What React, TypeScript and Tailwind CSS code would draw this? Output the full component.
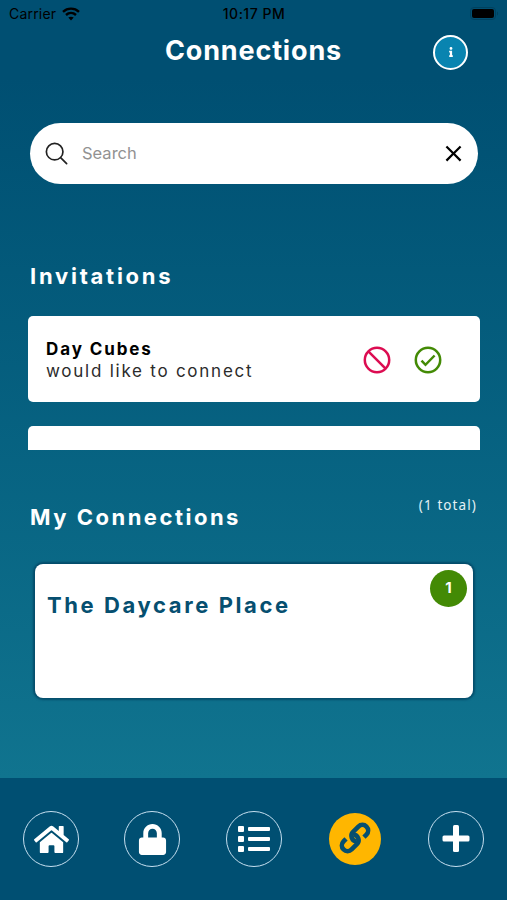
import { useState } from 'react';
import type { ComponentType } from 'react';
import { FaHome, FaInfo, FaList, FaLock } from 'react-icons/fa';
import { IoSearchOutline } from 'react-icons/io5';
import { MdClose } from 'react-icons/md';

interface Tab {
  id: string;
  icon: ComponentType<{ size?: number }>;
  size: number;
}

const TABS: Tab[] = [
  { id: 'home', icon: FaHome, size: 35 },
  { id: 'lock', icon: FaLock, size: 31 },
  { id: 'list', icon: FaList, size: 32 },
  { id: 'connections', icon: ChainIcon, size: 34 },
  { id: 'add', icon: PlusIcon, size: 28 },
];

export default function App() {
  const [search, setSearch] = useState('');
  const [activeTab, setActiveTab] = useState('connections');

  return (
    <div className="flex flex-col h-[900px] w-[507px] overflow-hidden bg-[#004f72] font-['Inter',sans-serif]">
      <div className="flex flex-col h-[778px] bg-linear-to-b from-[#004f72] from-10% to-[#10748f]">
        <StatusBar />

        <header className="grid grid-cols-[1fr_auto_1fr] items-center h-[50px] px-[39px]">
          <h1 className="col-start-2 text-[27px] leading-none font-bold tracking-[0.85px] text-white pb-1">Connections</h1>
          <button className="justify-self-end flex items-center justify-center size-[35px] rounded-full border-[2.5px] border-white bg-[#0984b0] text-white">
            <FaInfo size={10} />
          </button>
        </header>

        <div className="flex items-center h-[61px] mt-[46px] ml-[30px] mr-[29px] pl-[13px] pr-3 rounded-full bg-white">
          <IoSearchOutline size={27} className="text-[#222]" />
          <input
            type="text"
            placeholder="Search"
            value={search}
            onChange={(e) => setSearch(e.target.value)}
            className="flex-1 min-w-0 pl-3 text-[16.5px] text-black placeholder:text-[#929292] focus:outline-none"
          />
          <button onClick={() => setSearch('')}>
            <MdClose size={27} className="-mr-px text-black" />
          </button>
        </div>

        <section className="flex flex-col pt-[78px] px-7">
          <h2 className="pl-0.5 text-[22px] leading-7 font-bold tracking-[2.75px] text-white">Invitations</h2>
          <div className="h-[134px] mt-[26px] -mr-px overflow-hidden">
            <div className="flex items-center h-[86px] pl-[18px] pr-[36px] rounded-[5px] bg-white">
              <div className="flex-1 pt-0.5 text-[17px] leading-[22px] text-black">
                <p className="font-bold tracking-[1.9px]">Day Cubes</p>
                <p className="font-normal tracking-[1.75px] text-[#2b2b2b]">would like to connect</p>
              </div>
              <button className="pt-0.5 mr-[19px]">
                <BlockIcon />
              </button>
              <button className="pt-0.5">
                <CheckIcon />
              </button>
            </div>
            <div className="h-[86px] mt-6 rounded-[5px] bg-white" />
          </div>
        </section>

        <section className="flex flex-col pt-[45px] pl-[30px] pr-[30px]">
          <div className="flex justify-between">
            <h2 className="pt-[8px] text-[22px] leading-7 font-bold tracking-[2.5px] text-white">My Connections</h2>
            <span className="font-['Noto_Sans',sans-serif] text-[13.5px] leading-5 tracking-[1.1px] text-[#e4f1f5]">(1 total)</span>
          </div>
          <div className="flex justify-between h-[134px] mt-[33px] ml-[5px] mr-[4px] pl-[12px] pr-1.5 pt-1.5 rounded-lg bg-white shadow-[0_0_2px_2px_rgba(0,60,90,0.65)]">
            <h3 className="pt-[21px] text-[22px] leading-7 font-bold tracking-[2.6px] text-[#064f70]">The Daycare Place</h3>
            <span className="flex items-center justify-center size-[37px] rounded-full bg-[#438a05] text-[15px] font-bold text-white">1</span>
          </div>
        </section>
      </div>

      <nav className="flex justify-between h-[122px] pt-[33px] px-[23px] bg-[#004f72]">
        {TABS.map(({ id, icon: Icon, size }) => (
          <button
            key={id}
            onClick={() => setActiveTab(id)}
            className={`flex items-center justify-center size-14 rounded-full ${
              id === activeTab ? 'border-2 border-transparent bg-[#ffb600] bg-clip-padding text-[#064f70]' : 'border-[1.5px] border-[#c5dff0] text-white'
            }`}
          >
            <Icon size={size} />
          </button>
        ))}
      </nav>
    </div>
  );
}

function StatusBar() {
  return (
    <div className="grid grid-cols-3 items-center h-[27px] pl-[9px] pr-2 text-[14px] text-black">
      <div className="flex items-center gap-1.5">
        <span className="tracking-[0.2px]">Carrier</span>
        <svg width="18" height="14" viewBox="0 0 18 14" fill="none" stroke="currentColor" strokeWidth="2.4">
          <path d="M1 4.8C5.5 .6 12.5 .6 17 4.8" />
          <path d="M4 8C7 5.2 11 5.2 14 8" />
          <path d="M9 13.6L6.3 10.6C7.8 9.3 10.2 9.3 11.7 10.6Z" fill="currentColor" stroke="none" />
        </svg>
      </div>
      <span className="text-center font-medium tracking-[0.5px]">10:17 PM</span>
      <svg className="justify-self-end" width="29" height="13" viewBox="0 0 29 13">
        <rect x="0.5" y="0.5" width="25" height="12" rx="3.5" fill="none" stroke="#00415e" />
        <rect x="2" y="2" width="22" height="9" rx="2" fill="#000" />
        <path d="M27 4.5C28.5 5 28.5 8 27 8.5Z" fill="#00415e" />
      </svg>
    </div>
  );
}

function ChainIcon({ size = 34 }: { size?: number }) {
  return (
    <svg width={size} height={size} viewBox="-17 -16 34 34" fill="none" stroke="currentColor" strokeWidth="4.6">
      <g transform="rotate(-45)">
        <path d="M7 5.7H10.5A5.7 5.7 0 0 0 10.5 -5.7H3A5.7 5.7 0 0 0 -1.4 3.6" />
        <path d="M-7 -5.7H-10.5A5.7 5.7 0 0 0 -10.5 5.7H-3A5.7 5.7 0 0 0 1.4 -3.6" />
      </g>
    </svg>
  );
}

function PlusIcon({ size = 28 }: { size?: number }) {
  return (
    <svg width={size} height={size} viewBox="0 0 28 28" fill="currentColor">
      <rect x="11" y="0" width="6" height="27" rx="1.5" />
      <rect x="0.5" y="10.5" width="27" height="6" rx="1.5" />
    </svg>
  );
}

function BlockIcon() {
  return (
    <svg width="32" height="32" viewBox="0 0 32 32" fill="none" stroke="#dc0c51" strokeWidth="2.5">
      <circle cx="16" cy="16" r="12.2" />
      <path d="M7.4 7.4L24.6 24.6" />
    </svg>
  );
}

function CheckIcon() {
  return (
    <svg width="32" height="32" viewBox="0 0 32 32" fill="none" stroke="#438a05" strokeWidth="2.5">
      <circle cx="16" cy="16" r="12.2" />
      <path d="M9.5 16.6L13.5 20.8L22.6 11.5" />
    </svg>
  );
}
